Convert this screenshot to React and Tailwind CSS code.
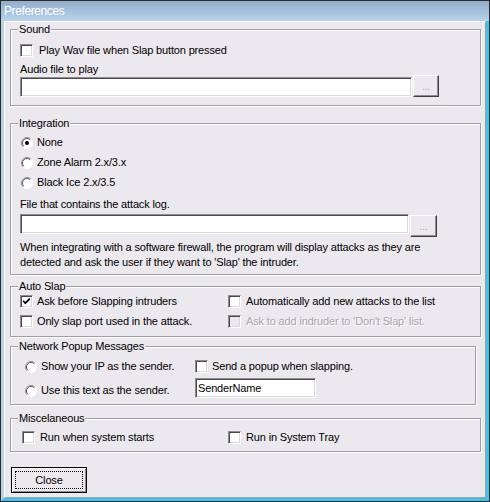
import React from "react";

function Check({ checked = false, disabled = false }) {
  return (
    <span
      className={
        disabled
          ? "inline-flex h-[13px] w-[13px] shrink-0 items-center justify-center border border-t-[#8d8c90] border-l-[#8d8c90] border-r-white border-b-white bg-[#ece9ee] shadow-[inset_1px_1px_0_#4a494d,inset_-1px_-1px_0_#dcd9dd]"
          : "inline-flex h-[13px] w-[13px] shrink-0 items-center justify-center border border-t-[#8d8c90] border-l-[#8d8c90] border-r-white border-b-white bg-white shadow-[inset_1px_1px_0_#4a494d,inset_-1px_-1px_0_#dcd9dd]"
      }
    >
      {checked && (
        <svg width="9" height="9" viewBox="0 0 9 9">
          <path d="M1.2 3.8 L3.3 6.2 L7.8 1.6" fill="none" stroke="#000" strokeWidth="1.7" />
        </svg>
      )}
    </span>
  );
}

function Radio({ checked = false }) {
  return (
    <svg width="12" height="12" viewBox="0 0 12 12" className="shrink-0">
      <circle cx="6" cy="6" r="5.5" fill="#fff" />
      <path d="M2.11 9.89 A5.5 5.5 0 0 1 9.89 2.11" fill="none" stroke="#8d8c90" strokeWidth="1" />
      <path d="M2.8 9.2 A4.5 4.5 0 0 1 9.2 2.8" fill="none" stroke="#5a595d" strokeWidth="1" />
      <path d="M9.89 2.11 A5.5 5.5 0 0 1 2.11 9.89" fill="none" stroke="#fff" strokeWidth="1" />
      {checked && <circle cx="6" cy="6" r="2" fill="#000" />}
    </svg>
  );
}

function Group({ title, className, children }) {
  return (
    <fieldset
      className={`border border-[#a09fa3] shadow-[inset_1px_1px_0_#fff,1px_1px_0_#fff] ${className}`}
    >
      <legend className="-ml-[2px] bg-[#ece9ee] px-[1px] leading-[13px]">{title}</legend>
      {children}
    </fieldset>
  );
}

function TextBox({ className, value = "" }) {
  return (
    <div
      className={`flex h-[20px] items-center border border-t-[#8d8c90] border-l-[#8d8c90] border-r-white border-b-white bg-white pl-[2px] shadow-[inset_1px_1px_0_#4a494d,inset_-1px_-1px_0_#dcd9dd] ${className}`}
    >
      {value}
    </div>
  );
}

function BrowseButton({ className }) {
  return (
    <div
      className={`flex h-[22px] items-end justify-center border border-t-white border-l-white border-r-[#404040] border-b-[#404040] bg-[#ece9ee] pb-[5px] text-[10px] leading-[8px] text-[#a09fa3] shadow-[inset_-1px_-1px_0_#8d8c90] ${className}`}
    >
      ...
    </div>
  );
}

export default function App() {
  return (
    <div className="flex h-[502px] w-[490px] flex-col bg-[#2b2b2b] p-px font-['Liberation_Sans',Arial,sans-serif] text-[11px] leading-[13px] tracking-[-0.15px] text-black">
      <div className="flex h-[20px] shrink-0 items-center bg-gradient-to-b from-[#93aecb] to-[#b7d3ec] pl-[3px] text-[12px] tracking-[-0.4px] text-white">
        Preferences
      </div>
      <div className="flex flex-1 border-b-[3px] border-l-[3px] border-r-[3px] border-b-[#3cc4ec] border-l-[#b9d0e6] border-r-[#3cc4ec]">
        <div className="flex-1 border border-t-white border-l-white border-r-[#9f9ea2] border-b-[#9f9ea2] bg-[#ece9ee] pl-[5px] pr-[4px] pt-[1px]">
          <Group title="Sound" className="pb-[8px] pl-[9px]">
            <div className="mt-[8px] flex h-[13px] items-center gap-[6px]">
              <Check />
              <span>Play Wav file when Slap button pressed</span>
            </div>
            <div className="mt-[6px] leading-[12px]">Audio file to play</div>
            <div className="flex items-end">
              <TextBox className="w-[392px]" />
              <BrowseButton className="ml-[1px] w-[26px]" />
            </div>
          </Group>

          <Group title="Integration" className="mt-[11px] pb-[4px] pl-[9px]">
            <div className="ml-[1px] mt-[6px] flex h-[13px] items-center gap-[4px]">
              <Radio checked />
              <span>None</span>
            </div>
            <div className="ml-[1px] mt-[7px] flex h-[13px] items-center gap-[4px]">
              <Radio />
              <span>Zone Alarm 2.x/3.x</span>
            </div>
            <div className="ml-[1px] mt-[7px] flex h-[13px] items-center gap-[4px]">
              <Radio />
              <span>Black Ice 2.x/3.5</span>
            </div>
            <div className="mt-[9px]">File that contains the attack log.</div>
            <div className="mt-[3px] flex items-start">
              <TextBox className="w-[389px]" />
              <BrowseButton className="ml-[1px] mt-[1px] w-[27px]" />
            </div>
            <p className="mt-[3px] leading-[15px]">
              When integrating with a software firewall, the program will display attacks as they are
              <br />
              detected and ask the user if they want to 'Slap' the intruder.
            </p>
          </Group>

          <Group title="Auto Slap" className="mt-[5px] pb-[8px] pl-[9px]">
            <div className="mt-[2px] grid grid-cols-[208px_1fr]">
              <div className="flex h-[13px] items-center gap-[4px]">
                <Check checked />
                <span>Ask before Slapping intruders</span>
              </div>
              <div className="flex h-[13px] items-center gap-[5px]">
                <Check />
                <span>Automatically add new attacks to the list</span>
              </div>
            </div>
            <div className="mt-[7px] grid grid-cols-[208px_1fr]">
              <div className="flex h-[13px] items-center gap-[4px]">
                <Check />
                <span>Only slap port used in the attack.</span>
              </div>
              <div className="flex h-[13px] items-center gap-[5px]">
                <Check disabled />
                <span className="text-[#a7a6aa] [text-shadow:1px_1px_0_#fff]">
                  Ask to add indruder to 'Don't Slap' list.
                </span>
              </div>
            </div>
          </Group>

          <Group title="Network Popup Messages" className="mr-[5px] mt-[3px] pb-[6px] pl-[9px]">
            <div className="mt-[7px] grid grid-cols-[175px_1fr]">
              <div className="ml-[5px] flex h-[13px] items-center gap-[4px]">
                <Radio />
                <span>Show your IP as the sender.</span>
              </div>
              <div className="flex h-[13px] items-center gap-[4px]">
                <Check />
                <span>Send a popup when slapping.</span>
              </div>
            </div>
            <div className="mt-[5px] grid grid-cols-[175px_1fr] items-start">
              <div className="ml-[5px] mt-[6px] flex h-[13px] items-center gap-[4px]">
                <Radio />
                <span>Use this text as the sender.</span>
              </div>
              <TextBox className="w-[121px]" value="SenderName" />
            </div>
          </Group>

          <Group title="Miscelaneous" className="mt-[7px] pb-[7px] pl-[9px]">
            <div className="mt-[6px] grid grid-cols-[208px_1fr]">
              <div className="ml-[2px] flex h-[13px] items-center gap-[5px]">
                <Check />
                <span>Run when system starts</span>
              </div>
              <div className="flex h-[13px] items-center gap-[5px]">
                <Check />
                <span>Run in System Tray</span>
              </div>
            </div>
          </Group>

          <button className="ml-[1px] mt-[15px] flex h-[26px] w-[76px] border border-black bg-[#ece9ee] p-[3px] shadow-[inset_1px_1px_0_#fff,inset_-1px_-1px_0_#8d8c90]">
            <span className="flex flex-1 items-center justify-center border border-dotted border-black text-[11px]">
              Close
            </span>
          </button>
        </div>
      </div>
    </div>
  );
}
